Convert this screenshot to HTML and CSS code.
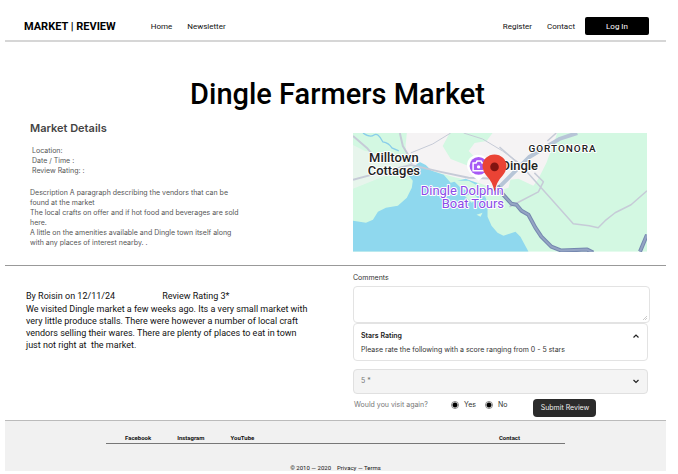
FILE: index.html
```html
<!DOCTYPE html>
<html lang="en">
<head>
<meta charset="utf-8">
<meta name="viewport" content="width=device-width, initial-scale=1">
<title>Dingle Farmers Market</title>
<link rel="stylesheet" href="styles.css">
</head>
<body>
<header class="site-header">
  <a class="brand" href="#">MARKET | REVIEW</a>
  <nav class="nav nav-main">
    <a href="#">Home</a>
    <a href="#">Newsletter</a>
  </nav>
  <nav class="nav nav-account">
    <a href="#">Register</a>
    <a href="#">Contact</a>
  </nav>
  <button class="login" type="button">Log In</button>
</header>

<main>
  <h1 class="title">Dingle Farmers Market</h1>

  <section class="split overview">
    <div class="details">
      <h2>Market Details</h2>
      <ul class="facts">
        <li>Location:</li>
        <li>Date / Time :</li>
        <li>Review Rating: :</li>
      </ul>
      <p>Description A paragraph describing the vendors that can be found at the market</p>
      <p>The local crafts on offer and if hot food and beverages are sold here.</p>
      <p>A little on the amenities available and Dingle town itself along with any places of interest nearby. .</p>
    </div>
    <svg class="map" viewBox="0 0 295 119" role="img" aria-label="Map of Dingle">
      <rect width="295" height="119" fill="#d3f8e2"/>
      <path d="M54 0H205L200 14L194 30L186 46L181 53L166 46L158 47L156 55L146 58L126 50L100 44L66 34L58 32L52 20Z" fill="#f5f3f4"/>
      <path d="M0 6L16 18L34 26L52 28L60 34L30 44L0 56V40Z" fill="#f5f3f4" opacity=".6"/>
      <path d="M0 0H50L54 22L35 20L12 18L0 12Z" fill="#d3f8e2"/>
      <path d="M97 0H140L134 8L122 10L116 18L124 26L116 33L98 26L90 13Z" fill="#d3f8e2"/>
      <path d="M0 119V88L13 90L20 87L25 79L33 75L45 73L54 65L59 55L60 48L56 43L58 36L67 29L73 32L79 38L91 42L98 50L113 46L124 50L130 57L135 70L135 84L139 93L145 100L151 103L163 99L168 104L176 119Z" fill="#8fd8ee"/>
      <path d="M101 48L116 48L127 54L132 64L120 60L109 56ZM112 63l9-2 5 5-7 4zM124 82l6-2-2 4zM136 56l11-3 9 6-4 13-9-3z" fill="#d3f8e2"/>
      <path d="M10 0Q17 5 21 2T30 9Q36 10 39 15L46 18" fill="none" stroke="#89cdea" stroke-width="1.3"/>
      <g fill="none" stroke="#c6cbd7" stroke-width="2" stroke-linejoin="round">
        <path d="M0 3L14 15L24 27M47 0L50 13L56 23L59 31M0 47L22 41L58 32L88 39L116 45L145 46"/>
        <path d="M58 20L80 11L98 0M111 0L130 6L150 18L168 31" stroke-width="1"/>
        <path d="M147 14L171 35L196 63L221 91L237 93L246 95L253 88L263 80L279 72L295 58M182 40L191 49L186 59L165 70L157 74M195 8L204 0" stroke-width="1.5"/>
      </g>
      <path d="M225 0L207 6L177 24L158 43L146 55" fill="none" stroke="#b7c5d7" stroke-width="4"/>
      <path d="M145 53L150 61L159 71L164 72L169 78L176 82L183 95L189 104L199 114L209 118L235 117L241 120M288 119L295 102" fill="none" stroke="#7588af" stroke-width="4" stroke-linejoin="round"/>
      <path d="M145 53L150 61L159 71L164 72L169 78L176 82L183 95L189 104L199 114L209 118L235 117L241 120M288 119L295 102" fill="none" stroke="#94a4c4" stroke-width="2" stroke-linejoin="round"/>
      <path d="M126 22a10.500 10.500 0 0 1 10 14q-2 5-10 12q-9-7-11-12a10.500 10.500 0 0 1 11-14z" fill="#fff"/>
      <circle cx="126" cy="33" r="9" fill="#a75af5"/>
      <path d="M120.500 30h3l1-2h4l1 2h2v8h-11z" fill="none" stroke="#fff" stroke-width="1.500"/>
      <circle cx="126" cy="34" r="1.700" fill="#fff"/>
      <g class="map-label">
        <text x="41" y="29" text-anchor="middle">Milltown</text>
        <text x="41" y="42" text-anchor="middle">Cottages</text>
        <text x="149" y="37">Dingle</text>
      </g>
      <text class="map-label map-region" x="176" y="19">GORTONORA</text>
      <g class="map-label map-poi">
        <text x="68" y="62">Dingle Dolphin</text>
        <text x="89" y="75">Boat Tours</text>
      </g>
      <path d="M142 59Q140 49 134 43Q130 38 130 33A12 11.500 0 0 1 154 33Q154 38 150 43Q144 49 142 59Z" fill="#ea4335"/>
      <circle cx="142" cy="34" r="4.300" fill="#811411"/>
    </svg>
  </section>

  <section class="split feedback">
    <article class="review">
      <div class="review-head"><span>By Roisin on 12/11/24</span><span>Review Rating 3*</span></div>
      <p>We visited Dingle market a few weeks ago. Its a very small market with very little produce stalls. There were however a number of local craft vendors selling their wares. There are plenty of places to eat in town just not right at&nbsp; the market.</p>
    </article>
    <form class="review-form">
      <label for="comments">Comments</label>
      <div class="comment-field">
        <textarea id="comments"></textarea>
        <svg class="grip" viewBox="0 0 4 4" aria-hidden="true"><path d="M0 4L4 0M2 4L4 2" stroke="#b5b5b5" stroke-width=".7"/></svg>
      </div>
      <div class="accordion">
        <button class="accordion-head" type="button" aria-expanded="true">
          <span>Stars Rating</span>
          <svg class="chevron" viewBox="0 0 8 8" aria-hidden="true"><path d="M1.500 5.500L4 3L6.500 5.500"/></svg>
        </button>
        <p>Please rate the following with a score ranging from 0 - 5 stars</p>
      </div>
      <div class="select-field">
        <select aria-label="Stars"><option>5 *</option></select>
        <svg class="chevron" viewBox="0 0 8 8" aria-hidden="true"><path d="M1.500 3L4 5.500L6.500 3"/></svg>
      </div>
      <div class="form-foot">
        <span class="question">Would you visit again?</span>
        <label class="choice"><input type="radio" name="visit-yes" checked>Yes</label>
        <label class="choice"><input type="radio" name="visit-no" checked>No</label>
        <button class="submit" type="submit">Submit Review</button>
      </div>
    </form>
  </section>
</main>

<footer class="site-footer">
  <nav class="footer-nav">
    <a href="#">Facebook</a>
    <a href="#">Instagram</a>
    <a href="#">YouTube</a>
    <a class="footer-contact" href="#">Contact</a>
  </nav>
  <p class="legal"><span>© 2010 — 2020</span><a href="#">Privacy — Terms</a></p>
</footer>
</body>
</html>
```
FILE: styles.css
```css
* { box-sizing: border-box; }
body {
  margin: 0;
  padding: 0 12px 0 5px;
  background: #fff;
  color: #111;
  font-family: Roboto, sans-serif;
  font-size: 8px;
}
h1, h2, p, ul { margin: 0; padding: 0; }
ul { list-style: none; }
a { color: inherit; text-decoration: none; }
button, textarea, select { font: inherit; }

.site-header {
  display: flex;
  align-items: center;
  padding: 17px 17px 5px 19px;
  border-bottom: 2px solid #d6d6d6;
}
.brand { font-size: 11px; font-weight: 700; color: #000; }
.nav { display: flex; gap: 15px; }
.nav-main { margin-left: 35px; }
.nav-account { margin-left: auto; }
.login {
  width: 64px;
  height: 18px;
  margin-left: 10px;
  padding: 0;
  border: 0;
  border-radius: 2px;
  background: #000;
  color: #fff;
}

.title {
  padding: 32px 0 8px 4px;
  font-size: 29px;
  line-height: 40px;
  font-weight: 500;
  text-align: center;
  color: #000;
}
.split { display: grid; grid-template-columns: 348px 1fr; }
.overview {
  padding: 0 19px 13px 0;
  border-bottom: 1px solid #999;
}
.details {
  width: 237px;
  padding-left: 25px;
  font-family: Inter, sans-serif;
  font-size: 7px;
  line-height: 10px;
  color: #555;
}
.details h2 { font-size: 11px; line-height: 13px; font-weight: 600; color: #444; }
.facts { padding: 11px 0 12px 2px; }
.map { display: block; width: 100%; margin-top: 11px; }
.map-label {
  font-family: Roboto, sans-serif;
  font-size: 13px;
  font-weight: 500;
  fill: #222;
  stroke: #fff;
  stroke-width: 2px;
  stroke-linejoin: round;
  paint-order: stroke;
}
.map-region { font-size: 10px; letter-spacing: 1px; }
.map-poi { font-weight: 400; fill: #8b4be8; }

.review { padding: 24px 0 0 21px; font-size: 9px; line-height: 12px; }
.review p { width: 284px; }
.review-head { display: flex; gap: 47px; line-height: 13px; }

.review-form {
  padding: 6px 16px 3px 0;
  font-family: Inter, sans-serif;
  font-size: 7px;
  line-height: 12px;
  color: #333;
}
.review-form > label { display: block; }
.comment-field, .select-field { position: relative; }
.comment-field { margin-top: 2px; }
textarea {
  display: block;
  width: 100%;
  height: 37px;
  padding: 6px;
  border: 1px solid #e3e3e3;
  border-radius: 4px;
  resize: none;
}
.grip { position: absolute; right: 3px; bottom: 3px; width: 4px; height: 4px; }
.accordion {
  margin-right: 2px;
  padding: 6px 7px 3px;
  border: 1px solid #e3e3e3;
  border-radius: 4px;
}
.accordion-head {
  display: flex;
  justify-content: space-between;
  align-items: center;
  width: 100%;
  padding: 0;
  border: 0;
  background: none;
  font-weight: 600;
  color: #222;
}
.accordion p { line-height: 15px; }
.chevron { width: 8px; height: 8px; fill: none; stroke: #222; stroke-width: 1.2px; }
.select-field { margin: 8px 2px 0 0; }
select {
  display: block;
  width: 100%;
  height: 25px;
  padding: 0 7px;
  appearance: none;
  border: 1px solid #e0e0e0;
  border-radius: 4px;
  background: #f4f4f4;
  color: #777;
}
.select-field .chevron { position: absolute; right: 8px; top: 8px; }
.form-foot { display: flex; padding: 5px 0 0 1px; }
.question { width: 97px; color: #777; }
.choice { display: flex; align-items: center; gap: 5px; height: 12px; margin-right: 9px; }
.choice input {
  width: 8px;
  height: 8px;
  margin: 0;
  appearance: none;
  border: 1px solid #888;
  border-radius: 50%;
  background: radial-gradient(circle, #000 2px, #fff 3px);
}
.submit {
  width: 63px;
  height: 18px;
  margin-left: 17px;
  padding: 0;
  border: 0;
  border-radius: 4px;
  background: #2b2b2b;
  color: #eee;
}

.site-footer {
  border-top: 1px solid #bbb;
  padding: 12px 101px 0;
  background: #f1f1f1;
  font-size: 6px;
  line-height: 10px;
}
.footer-nav {
  display: flex;
  gap: 26px;
  padding: 0 45px 0 19px;
  border-bottom: 1px solid #777;
  font-weight: 700;
}
.footer-contact { margin-left: auto; }
.legal { display: flex; justify-content: center; gap: 6px; padding-top: 19px; height: 27px; overflow: hidden; }
```
